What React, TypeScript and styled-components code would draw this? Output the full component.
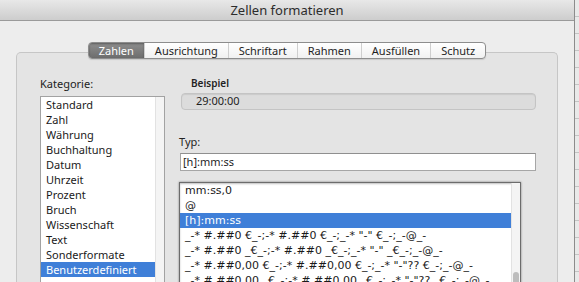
import React from 'react';
import styled, { createGlobalStyle } from 'styled-components';

const GlobalStyle = createGlobalStyle`
  html, body {
    margin: 0;
    padding: 0;
    height: 282px;
    overflow: hidden;
    background: #e2e2e2;
  }
  body {
    font-family: "Noto Sans", "DejaVu Sans", sans-serif;
    color: #1e1e1e;
  }
`;

const Page = styled.div`
  display: flex;
  width: 579px;
  height: 282px;
  overflow: hidden;
`;

const Window = styled.div`
  width: 575px;
  height: 282px;
  flex-shrink: 0;
  background: #ededed;
  border-right: 1px solid #8c8c8c;
  box-sizing: border-box;
  display: flex;
  flex-direction: column;
`;

const Backdrop = styled.div`
  flex: 1;
  background: repeating-linear-gradient(
    to bottom,
    #e9e9e9 0px,
    #e9e9e9 16px,
    #c4c4c4 16px,
    #c4c4c4 17px
  );
`;

const TitleBar = styled.div`
  height: 20px;
  flex-shrink: 0;
  background: linear-gradient(to bottom, #e8e8e8, #cdcdcd);
  border-bottom: 1px solid #9a9a9a;
  display: flex;
  align-items: center;
  justify-content: center;
  font-size: 13px;
  line-height: 20px;
  color: #2c2c2c;
`;

const Body = styled.div`
  flex: 1;
  padding-top: 21px;
  display: flex;
  flex-direction: column;
`;

const TabBar = styled.div`
  position: relative;
  z-index: 1;
  align-self: center;
  display: flex;
  height: 17px;
  margin-bottom: -7px;
  border: 1px solid #8d8d8d;
  border-radius: 4px;
  overflow: hidden;
  box-sizing: border-box;
  background: linear-gradient(to bottom, #ffffff, #f1f1f1);
  box-shadow: 0 1px 1px rgba(0, 0, 0, 0.12);
`;

const Tab = styled.div<{ $active?: boolean }>`
  padding: 0 10px;
  font-size: 11px;
  line-height: 15px;
  color: ${(p) => (p.$active ? '#ffffff' : '#1e1e1e')};
  background: ${(p) =>
    p.$active ? 'linear-gradient(to bottom, #8e8e8e, #6d6d6d)' : 'transparent'};
  box-shadow: ${(p) => (p.$active ? 'inset 0 1px 2px rgba(0,0,0,0.35)' : 'none')};
  border-left: 1px solid ${(p) => (p.$active ? '#7a7a7a' : '#cfcfcf')};

  &:first-child {
    border-left: none;
  }
`;

const GroupBox = styled.div`
  flex: 1;
  margin: 0 16px;
  padding: 24px 0 0 23px;
  background: #e4e4e4;
  border: 1px solid #c6c6c6;
  border-bottom: none;
  border-radius: 5px 5px 0 0;
  display: grid;
  grid-template-columns: 125px 357px;
  column-gap: 14px;
  align-items: start;
`;

const Column = styled.div`
  display: flex;
  flex-direction: column;
`;

const FieldLabel = styled.div<{ $small?: boolean; $indent?: number; $gap?: number }>`
  font-size: ${(p) => (p.$small ? '10px' : '11px')};
  line-height: ${(p) => (p.$small ? '12px' : '14px')};
  font-weight: ${(p) => (p.$small ? 600 : 400)};
  margin-left: ${(p) => p.$indent ?? 0}px;
  margin-top: ${(p) => p.$gap ?? 0}px;
  color: #222;
`;

const ListBox = styled.div<{ $width: number; $focused?: boolean; $gap: number }>`
  width: ${(p) => p.$width}px;
  height: 220px;
  margin-top: ${(p) => p.$gap}px;
  box-sizing: border-box;
  display: flex;
  background: #ffffff;
  border: 1px solid ${(p) => (p.$focused ? '#6c6c6c' : '#a2a2a2')};
  box-shadow: ${(p) =>
    p.$focused ? '0 0 2px rgba(0,0,0,0.45), inset 0 1px 2px rgba(0,0,0,0.25)' : 'none'};
  overflow: hidden;
`;

const Items = styled.div`
  flex: 1;
  min-width: 0;
  display: flex;
  flex-direction: column;
`;

const Item = styled.div<{ $selected?: boolean; $code?: boolean }>`
  height: 15px;
  padding-left: 5px;
  font-family: ${(p) =>
    p.$code ? '"DejaVu Sans", "Noto Sans", sans-serif' : '"Noto Sans", "DejaVu Sans", sans-serif'};
  font-size: 11px;
  line-height: 15px;
  white-space: nowrap;
  color: ${(p) => (p.$selected ? '#ffffff' : '#1a1a1a')};
  background: ${(p) => (p.$selected ? '#3f7fd8' : 'transparent')};
`;

const ScrollTrack = styled.div`
  width: 8px;
  flex-shrink: 0;
  background: #f4f4f4;
  border-left: 1px solid #e2e2e2;
  display: flex;
  justify-content: center;
`;

const ScrollThumb = styled.div<{ $top: number }>`
  width: 6px;
  height: 60px;
  margin-top: ${(p) => p.$top}px;
  border-radius: 3px;
  background: #bdbdbd;
`;

const Sample = styled.div`
  margin: 4px 0 0 2px;
  width: 355px;
  height: 17px;
  box-sizing: border-box;
  padding-left: 14px;
  background: #dcdcdc;
  border: 1px solid #c4c4c4;
  border-radius: 4px;
  box-shadow: inset 0 1px 1px rgba(0, 0, 0, 0.08);
  font-size: 11px;
  line-height: 13px;
  color: #1e1e1e;
`;

const TextInput = styled.div`
  margin: 4px 0 0 1px;
  width: 356px;
  height: 18px;
  box-sizing: border-box;
  padding-left: 2px;
  background: #ffffff;
  border: 1px solid #a6a6a6;
  border-top-color: #8f8f8f;
  font-size: 11px;
  line-height: 15px;
`;

const categories = [
  'Standard',
  'Zahl',
  'Währung',
  'Buchhaltung',
  'Datum',
  'Uhrzeit',
  'Prozent',
  'Bruch',
  'Wissenschaft',
  'Text',
  'Sonderformate',
  'Benutzerdefiniert',
];

const formats = [
  'mm:ss,0',
  '@',
  '[h]:mm:ss',
  '_-* #.##0 €_-;-* #.##0 €_-;_-* "-" €_-;_-@_-',
  '_-* #.##0 _€_-;-* #.##0 _€_-;_-* "-" _€_-;_-@_-',
  '_-* #.##0,00 €_-;-* #.##0,00 €_-;_-* "-"?? €_-;_-@_-',
  '_-* #.##0,00 _€_-;-* #.##0,00 _€_-;_-* "-"?? _€_-;_-@_-',
];

const tabs = ['Zahlen', 'Ausrichtung', 'Schriftart', 'Rahmen', 'Ausfüllen', 'Schutz'];

export default function App() {
  return (
    <>
      <GlobalStyle />
      <Page>
        <Window>
          <TitleBar>Zellen formatieren</TitleBar>
          <Body>
            <TabBar>
              {tabs.map((t, i) => (
                <Tab key={t} $active={i === 0}>
                  {t}
                </Tab>
              ))}
            </TabBar>
            <GroupBox>
              <Column>
                <FieldLabel>Kategorie:</FieldLabel>
                <ListBox $width={125} $gap={5}>
                  <Items>
                    {categories.map((c) => (
                      <Item key={c} $selected={c === 'Benutzerdefiniert'}>
                        {c}
                      </Item>
                    ))}
                  </Items>
                  <ScrollTrack />
                </ListBox>
              </Column>
              <Column>
                <FieldLabel $small $indent={12}>
                  Beispiel
                </FieldLabel>
                <Sample>29:00:00</Sample>
                <FieldLabel $gap={25}>Typ:</FieldLabel>
                <TextInput>[h]:mm:ss</TextInput>
                <ListBox $width={342} $gap={11} $focused>
                  <Items>
                    {formats.map((f) => (
                      <Item key={f} $code $selected={f === '[h]:mm:ss'}>
                        {f}
                      </Item>
                    ))}
                  </Items>
                  <ScrollTrack>
                    <ScrollThumb $top={89} />
                  </ScrollTrack>
                </ListBox>
              </Column>
            </GroupBox>
          </Body>
        </Window>
        <Backdrop />
      </Page>
    </>
  );
}
